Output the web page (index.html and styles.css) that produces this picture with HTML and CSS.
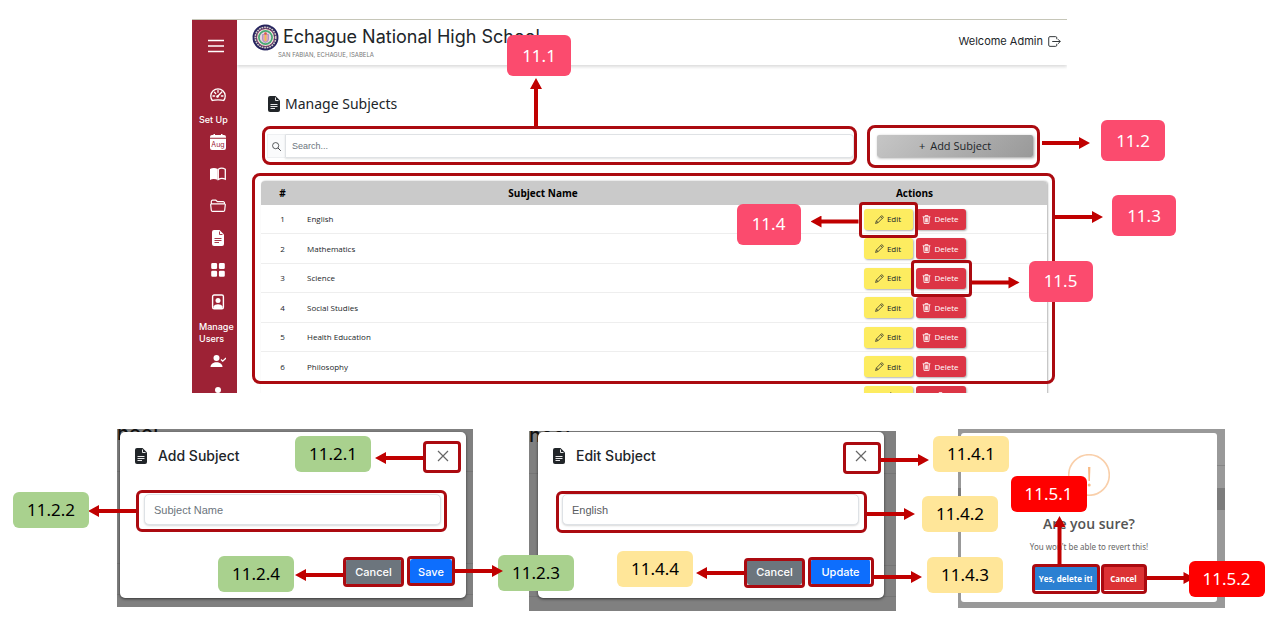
FILE: index.html
```html
<!DOCTYPE html>
<html lang="en">
<head>
<meta charset="utf-8">
<meta name="viewport" content="width=device-width, initial-scale=1">
<title>Manage Subjects</title>
<link rel="stylesheet" href="styles.css">
</head>
<body>
<svg class="sprite" aria-hidden="true">
  <symbol id="file" viewBox="0 0 12 16"><path fill="currentColor" d="M2 0h5.5L12 4.5V14a2 2 0 0 1-2 2H2a2 2 0 0 1-2-2V2a2 2 0 0 1 2-2z"/><path d="M7.500 1.500v3H10.500M2.500 8.500h7M2.500 10.500h7M2.500 12.500h4.500" fill="none" stroke="var(--cut)" stroke-width=".9"/></symbol>
  <symbol id="pencil" viewBox="0 0 16 16"><path fill="none" stroke="currentColor" stroke-width="1.300" stroke-linejoin="round" d="M12 1l3 3L5.500 13.500 1 15l1.500-4.500zM10 3l3 3M2.500 10.500l3 3"/></symbol>
  <symbol id="trash" viewBox="0 0 16 16"><path fill="none" stroke="currentColor" stroke-width="1.500" d="M1 3.200h14M5.500 3V1h5v2M2.700 3.500L3.700 15h8.600l1-11.500M5.800 5.500l.3 7.500M8 5.500V13M10.200 5.500L9.900 13"/></symbol>
  <symbol id="cross" viewBox="0 0 12 12"><path d="M1 1l10 10M11 1L1 11" fill="none" stroke="currentColor" stroke-width="1.200"/></symbol>
</svg>

<section class="app">
  <nav class="sidebar" aria-label="Main">
    <button class="menu" aria-label="Menu"><svg viewBox="0 0 16 16"><path d="M0 2.500h16M0 8h16M0 13.500h16" stroke="currentColor" stroke-width="1.300"/></svg></button>
    <ul>
      <li><a href="#" aria-label="Dashboard"><svg viewBox="0 0 16 16"><path d="M2.300 13.500a7.200 7.200 0 1 1 11.400 0c-2-.9-9.400-.9-11.400 0zM8 3.500v1.800M3 9h1.600M11.400 9H13M4.500 5.300l1.200 1.200M7.500 9.500L11.800 5" fill="none" stroke="currentColor" stroke-width="1.300" stroke-linecap="round"/><circle cx="7.500" cy="9.500" r="1.300" fill="currentColor"/></svg></a></li>
    </ul>
    <h2>Set Up</h2>
    <ul>
      <li><a href="#" aria-label="School year"><svg viewBox="0 0 16 16"><path d="M3.500 0h1.500v1h6V0h1.500v1H14a2 2 0 0 1 2 2v.800H0V3a2 2 0 0 1 2-2h1.500zM0 4.800h16V14a2 2 0 0 1-2 2H2a2 2 0 0 1-2-2z" fill="currentColor"/><text class="month" x="8" y="12.500">Aug</text></svg></a></li>
      <li><a href="#" aria-label="Books"><svg viewBox="0 0 16 16"><path d="M0 3c2-1.300 5.500-1.500 7.700 0v11C5.500 12.700 2 12.700 0 14z" fill="currentColor"/><path d="M8.300 3.200c2-1.400 5-1.200 7 0v10c-2-1-5-1-7 .300z" fill="none" stroke="currentColor" stroke-width="1.300"/></svg></a></li>
      <li><a href="#" aria-label="Folders"><svg viewBox="0 0 16 16"><path d="M1.300 5.500V3.500a1.300 1.300 0 0 1 1.300-1.300h3.200l1.700 1.500h5.700a1.300 1.300 0 0 1 1.300 1.300v.700M1.500 5.800h13a.8.8 0 0 1 .8.900l-.6 5.500a1.300 1.300 0 0 1-1.300 1.200H2.600a1.300 1.300 0 0 1-1.300-1.200L.7 6.700a.8.800 0 0 1 .8-.9z" fill="none" stroke="currentColor" stroke-width="1.200"/></svg></a></li>
      <li><a href="#" aria-label="Subjects"><svg><use href="#file"/></svg></a></li>
      <li><a href="#" aria-label="Sections"><svg viewBox="0 0 16 16"><path d="M2.500 1h3.300a1.300 1.300 0 0 1 1.300 1.300v3.400A1.300 1.300 0 0 1 5.800 7H2.500a1.300 1.300 0 0 1-1.300-1.300V2.300A1.300 1.300 0 0 1 2.500 1zm7.700 0h3.300a1.300 1.300 0 0 1 1.300 1.300v3.400A1.300 1.300 0 0 1 13.500 7h-3.300a1.300 1.300 0 0 1-1.300-1.300V2.300A1.300 1.300 0 0 1 10.200 1zM2.500 8.800h3.300a1.300 1.300 0 0 1 1.300 1.300v3.400a1.300 1.300 0 0 1-1.300 1.300H2.500a1.300 1.300 0 0 1-1.300-1.300v-3.400a1.300 1.300 0 0 1 1.300-1.300zm7.700 0h3.300a1.300 1.300 0 0 1 1.300 1.300v3.400a1.300 1.300 0 0 1-1.300 1.300h-3.300a1.300 1.300 0 0 1-1.300-1.300v-3.400a1.300 1.300 0 0 1 1.300-1.300z" fill="currentColor"/></svg></a></li>
      <li><a href="#" aria-label="Profiles"><svg viewBox="0 0 16 16"><rect x="2.600" y="1" width="10.800" height="13.800" rx="1.500" fill="none" stroke="currentColor" stroke-width="1.400"/><circle cx="8" cy="6.500" r="2.500" fill="currentColor"/><path d="M3.500 14v-1.500c1.500-3 7.500-3 9 0V14z" fill="currentColor"/></svg></a></li>
    </ul>
    <h2>Manage Users</h2>
    <ul>
      <li><a href="#" aria-label="Verified users"><svg viewBox="0 0 16 16"><circle cx="6.500" cy="5" r="3" fill="currentColor"/><path d="M.5 14c0-6.500 12-6.500 12 0z" fill="currentColor"/><path d="M11 6.500l1.700 1.700L16 5" fill="none" stroke="currentColor" stroke-width="1.300"/></svg></a></li>
      <li><a href="#" aria-label="Users"><svg viewBox="0 0 16 16"><circle cx="8" cy="5" r="3" fill="currentColor"/><path d="M2 14c0-6.500 12-6.500 12 0z" fill="currentColor"/></svg></a></li>
    </ul>
  </nav>

  <div class="content">
    <header class="topbar">
      <div>
        <div class="brand">
          <svg class="seal" viewBox="0 0 27 27" aria-hidden="true">
            <circle cx="13.500" cy="13.500" r="11" fill="#26245e"/>
            <circle cx="13.500" cy="13.500" r="11.500" fill="none" stroke="#26245e" stroke-width="3" stroke-dasharray="4.500 1.522" stroke-linecap="round"/>
            <circle cx="13.500" cy="13.500" r="10.300" fill="none" stroke="#d8cdc8" stroke-width="1.600" stroke-dasharray="1.800 .8"/>
            <circle cx="13.500" cy="13.500" r="8.800" fill="#f1f3ea" stroke="#a34a68" stroke-width=".8"/>
            <circle cx="13.500" cy="13.500" r="6.600" fill="#e6d3e2" stroke="#4aa873" stroke-width="1.700"/>
            <path d="M10.500 10.500h6v4.500q0 2.500-3 3.500q-3-1-3-3.500z" fill="#e2a3b4" stroke="#9a8cc4" stroke-width=".8"/>
            <path d="M13.500 9v8" stroke="#f0c34b" stroke-width="1.600"/>
            <circle cx="13.500" cy="9.500" r="1.300" fill="#d6534d"/>
          </svg>
          <h1>Echague National High School</h1>
        </div>
        <p class="address">SAN FABIAN, ECHAGUE, ISABELA</p>
      </div>
      <a class="logout" href="#">Welcome Admin
        <svg viewBox="0 0 14 12"><path d="M9.500 3.500V2A1.300 1.300 0 0 0 8.200.700H2A1.300 1.300 0 0 0 .7 2v8A1.300 1.300 0 0 0 2 11.300h6.200A1.300 1.300 0 0 0 9.500 10V8.500M4.500 6h8.800M10.800 3.500L13.300 6l-2.500 2.500" fill="none" stroke="currentColor"/></svg>
      </a>
    </header>

    <h2 class="page-title"><svg class="file"><use href="#file"/></svg>Manage Subjects</h2>

    <div class="toolbar">
      <div class="search mark">
        <label for="search" aria-label="Search"><svg viewBox="0 0 16 16"><circle cx="6.500" cy="6.500" r="5.500" fill="none" stroke="currentColor" stroke-width="1.300"/><path d="M10.500 10.500l5 5" stroke="currentColor" stroke-width="1.600"/></svg></label>
        <input id="search" type="text" placeholder="Search...">
        <span class="frame f-search"><i class="arrow up"></i><b class="tag pink">11.1</b></span>
      </div>
      <div class="mark add-wrap">
        <button class="add"><span>+</span>Add Subject</button>
        <span class="frame f-add"><i class="arrow right"></i><b class="tag pink">11.2</b></span>
      </div>
    </div>

    <div class="mark table-wrap">
      <table>
        <thead><tr><th class="c-num">#</th><th>Subject Name</th><th class="c-act">Actions</th></tr></thead>
        <tbody>
          <tr><td>1</td><td>English</td><td><div class="actions"><span class="mark"><button class="edit"><svg><use href="#pencil"/></svg>Edit</button><span class="frame f-edit"><i class="arrow left"></i><b class="tag pink">11.4</b></span></span><button class="delete"><svg><use href="#trash"/></svg>Delete</button></div></td></tr>
          <tr><td>2</td><td>Mathematics</td><td><div class="actions"><button class="edit"><svg><use href="#pencil"/></svg>Edit</button><button class="delete"><svg><use href="#trash"/></svg>Delete</button></div></td></tr>
          <tr><td>3</td><td>Science</td><td><div class="actions"><button class="edit"><svg><use href="#pencil"/></svg>Edit</button><span class="mark"><button class="delete"><svg><use href="#trash"/></svg>Delete</button><span class="frame f-delete"><i class="arrow right"></i><b class="tag pink">11.5</b></span></span></div></td></tr>
          <tr><td>4</td><td>Social Studies</td><td><div class="actions"><button class="edit"><svg><use href="#pencil"/></svg>Edit</button><button class="delete"><svg><use href="#trash"/></svg>Delete</button></div></td></tr>
          <tr><td>5</td><td>Health Education</td><td><div class="actions"><button class="edit"><svg><use href="#pencil"/></svg>Edit</button><button class="delete"><svg><use href="#trash"/></svg>Delete</button></div></td></tr>
          <tr><td>6</td><td>Philosophy</td><td><div class="actions"><button class="edit"><svg><use href="#pencil"/></svg>Edit</button><button class="delete"><svg><use href="#trash"/></svg>Delete</button></div></td></tr>
          <tr><td></td><td></td><td><div class="actions"><button class="edit" aria-label="Edit"><svg><use href="#pencil"/></svg></button><button class="delete" aria-label="Delete"><svg><use href="#trash"/></svg></button></div></td></tr>
        </tbody>
      </table>
      <span class="frame f-table"><i class="arrow right"></i><b class="tag pink">11.3</b></span>
    </div>
  </div>
</section>

<section class="dialogs">
  <div class="backdrop add-panel">
    <span class="behind" aria-hidden="true">hool</span>
    <form class="dialog">
      <div class="head">
        <svg class="file"><use href="#file"/></svg><h2>Add Subject</h2>
        <span class="mark"><button type="button" class="close" aria-label="Close"><svg><use href="#cross"/></svg></button><span class="frame a-close"><i class="arrow left"></i><b class="tag green">11.2.1</b></span></span>
      </div>
      <div class="mark field"><input type="text" aria-label="Subject Name" placeholder="Subject Name"><span class="frame a-name"><i class="arrow left"></i><b class="tag green">11.2.2</b></span></div>
      <div class="foot">
        <span class="mark"><button type="button" class="btn gray">Cancel</button><span class="frame a-cancel"><i class="arrow left"></i><b class="tag green">11.2.4</b></span></span>
        <span class="mark"><button type="button" class="btn blue save">Save</button><span class="frame a-save"><i class="arrow right"></i><b class="tag green">11.2.3</b></span></span>
      </div>
    </form>
  </div>

  <div class="backdrop edit-panel">
    <span class="behind" aria-hidden="true">hool</span>
    <form class="dialog">
      <div class="head">
        <svg class="file"><use href="#file"/></svg><h2>Edit Subject</h2>
        <span class="mark"><button type="button" class="close" aria-label="Close"><svg><use href="#cross"/></svg></button><span class="frame e-close"><i class="arrow right"></i><b class="tag yellow">11.4.1</b></span></span>
      </div>
      <div class="mark field"><input type="text" aria-label="Subject Name" value="English"><span class="frame e-name"><i class="arrow right"></i><b class="tag yellow">11.4.2</b></span></div>
      <div class="foot">
        <span class="mark"><button type="button" class="btn gray">Cancel</button><span class="frame e-cancel"><i class="arrow left"></i><b class="tag yellow">11.4.4</b></span></span>
        <span class="mark"><button type="button" class="btn blue update">Update</button><span class="frame e-update"><i class="arrow right"></i><b class="tag yellow">11.4.3</b></span></span>
      </div>
    </form>
  </div>

  <div class="backdrop confirm-panel">
    <div class="dialog confirm">
      <svg class="warn" viewBox="0 0 42 42" aria-hidden="true"><circle cx="21" cy="21" r="20.300" fill="none" stroke="#f9cfaa" stroke-width="1.600"/><path d="M20 13h2.400l-.5 14h-1.400z" fill="#f8bb86"/><circle cx="21.200" cy="31" r="1.500" fill="#f8bb86"/></svg>
      <h2>Are you sure?</h2>
      <p>You won't be able to revert this!</p>
      <div class="choices">
        <span class="mark"><button class="yes">Yes, delete it!</button><span class="frame c-yes"><i class="arrow up"></i><b class="tag red">11.5.1</b></span></span>
        <span class="mark"><button class="no">Cancel</button><span class="frame c-no"><i class="arrow right"></i><b class="tag red">11.5.2</b></span></span>
      </div>
    </div>
  </div>
</section>
</body>
</html>
```
FILE: styles.css
```css
* { box-sizing: border-box; }
body { margin: 0; padding: 19px 0 0; background: #fff; color: #212529; font-family: "Open Sans", "Noto Sans", sans-serif; font-size: 8px; }
h1, h2, p, ul { margin: 0; padding: 0; }
ul { list-style: none; }
button { border: 0; padding: 0; font: inherit; color: inherit; background: none; cursor: pointer; }
input { font-family: "Liberation Sans", sans-serif; }
a { color: inherit; text-decoration: none; }
svg { display: block; flex: none; }
.sprite { position: absolute; width: 0; height: 0; }
.file { --cut: #fff; width: 12px; height: 16px; }

/* Application window */
.app { display: flex; height: 374px; margin: 0 213px 0 192px; border-top: 1px solid #c6c6b8; overflow-x: visible; overflow-y: clip; }
.sidebar { flex: 0 0 45px; padding-top: 18px; background: #9d2235; color: #fff; --cut: #9d2235; font-family: Inter, sans-serif; }
.sidebar svg { width: 16px; height: 16px; }
.menu { display: block; margin: 0 0 25px 16px; }
.sidebar li { display: flex; align-items: center; height: 32px; padding-left: 18px; }
.sidebar h2 { margin: 3px 0 0 7px; font-size: 9px; line-height: 12px; font-weight: 500; }
.month { font: 7px Inter, sans-serif; text-anchor: middle; fill: #9d2235; }

.content { flex: 1; min-width: 0; }
.topbar { display: flex; justify-content: space-between; height: 45px; padding: 4px 6px 0 15px; box-shadow: 0 2px 3px rgba(0, 0, 0, .14); clip-path: inset(0 0 -6px 0); font-family: Inter, sans-serif; }
.brand { display: flex; align-items: center; gap: 4px; height: 26px; }
.seal { width: 27px; height: 27px; }
.brand h1 { font-size: 18px; line-height: 24px; font-weight: 400; white-space: nowrap; -webkit-text-stroke: 0; }
.address { margin-left: 26px; font-size: 6px; line-height: 9px; color: #777; }
.logout { display: flex; align-items: center; gap: 5px; height: 34px; font-size: 11px; }
.logout svg { width: 13px; height: 11px; }
.page-title { display: flex; align-items: center; gap: 5px; margin: 29px 0 20px 31px; font-family: "Noto Sans", sans-serif; font-size: 14px; line-height: 20px; font-weight: 400; }

.toolbar { display: flex; gap: 23px; align-items: center; padding: 0 34px 0 30px; }
.search { display: flex; flex: 1; height: 24px; }
.search label { display: flex; align-items: center; justify-content: center; width: 18px; background: #fafbfc; border: 1px solid #eef0f2; border-right: 0; }
.search label svg { width: 9px; height: 9px; }
.search input { flex: 1; min-width: 0; padding: 0 6px; border: 1px solid #dfe2e5; border-radius: 0 4px 4px 0; font-size: 9px; box-shadow: 0 1px 2px rgba(0, 0, 0, .12); }
input::placeholder { color: #6c757d; opacity: 1; }
.add-wrap { flex: 0 0 156px; }
.add { display: flex; align-items: center; justify-content: center; gap: 5px; width: 100%; height: 22px; border-radius: 2px; background: linear-gradient(135deg, #c6c6c6, #999); box-shadow: 1px 1px 3px rgba(0, 0, 0, .4); font: 11px/20px "Open Sans", sans-serif; }

.table-wrap { margin: 23px 20px 0 24px; }
table { width: 100%; table-layout: fixed; border-spacing: 0; border-radius: 4px; box-shadow: 1px 0 2px rgba(0, 0, 0, .3); }
.c-num { width: 43px; }
.c-act { width: 265px; }
th { height: 24px; padding: 0; background: #cacaca; color: #000; font-size: 10px; line-height: 14px; font-weight: 700; }
th:first-child { border-top-left-radius: 4px; }
th:last-child { border-top-right-radius: 4px; }
td { height: 29px; padding: 0; border-bottom: 1px solid #eee; line-height: 12px; }
tr:nth-child(even) td { height: 30px; }
td:first-child { text-align: center; }
td:nth-child(2) { padding-left: 3px; }
.actions { display: flex; justify-content: center; gap: 3px; }
.actions button { display: flex; align-items: center; justify-content: center; gap: 3px; height: 21px; border-radius: 3px; box-shadow: 1px 1px 2px rgba(0, 0, 0, .3); }
.actions svg { width: 9px; height: 9px; }
.actions .edit { width: 49px; background: #fdec60; }
.actions .delete { width: 50px; background: #dc3545; color: #fff; }

/* Dialog windows */
.dialogs { display: grid; grid-template-columns: 356fr 56fr 367fr 62fr 267fr; align-items: start; padding: 36px 55px 30px 117px; }
.backdrop { position: relative; background: linear-gradient(#757575, #757575) 0 42px / 100% 1px no-repeat, linear-gradient(#757575, #757575) 0 134px / 100% 1px no-repeat, linear-gradient(#757575, #757575) 0 165px / 100% 1px no-repeat, #808080; }
.add-panel { padding: 3px 7px 9px 3px; }
.edit-panel { grid-column: 3; margin-top: 2px; padding: 1px 12px 13px 9px; }
.confirm-panel { grid-column: 5; padding: 4px 8px 6px 3px; background: linear-gradient(#7c7c7c, #7c7c7c) 0 59px / 100% 22px no-repeat, linear-gradient(#868686, #868686) 0 36px / 100% 1px no-repeat, #999; }
.behind { position: absolute; top: 0; left: 0; height: 14px; overflow: hidden; font: 500 20px/8px Inter, sans-serif; color: #111; }
.dialog { position: relative; background: #fff; border-radius: 5px; box-shadow: 0 1px 3px rgba(0, 0, 0, .6); padding: 12px 0 13px; }
.head { display: flex; align-items: center; height: 24px; padding: 0 17px 0 15px; }
.head h2 { flex: 1; margin-left: 11px; font: 500 14px/20px Inter, sans-serif; }
.close { display: block; color: #666; }
.close svg { width: 12px; height: 12px; }
.field { margin: 26px 25px 0 24px; }
.field input { display: block; width: 100%; height: 31px; padding: 0 9px; border: 1px solid #dee2e6; border-radius: 5px; font-size: 11px; color: #595c5f; box-shadow: 0 1px 2px rgba(0, 0, 0, .15); }
.foot { display: flex; justify-content: flex-end; gap: 9px; margin-top: 34px; padding-right: 14px; }
.btn { display: block; width: 55px; height: 26px; border-radius: 3px; color: #fff; font: 500 11px/20px Inter, sans-serif; }
.gray { background: #6c757d; }
.blue { background: #0d6efd; }
.save { width: 42px; }
.update { width: 59px; }
.confirm { padding: 21px 0 12px; text-align: center; box-shadow: none; border-radius: 3px; }
.warn { width: 42px; height: 42px; margin: 0 auto; }
.confirm h2 { margin-top: 18px; font-size: 14px; line-height: 20px; font-weight: 600; color: #545454; }
.confirm p { margin-top: 7px; line-height: 12px; color: #666; font-family: "Noto Sans", sans-serif; }
.choices { display: flex; justify-content: center; gap: 7px; margin-top: 14px; }
.choices button { display: block; height: 23px; color: #fff; font-weight: 700; }
.choices .yes { width: 62px; background: #2b80d2; }
.choices .no { width: 40px; background: #dc3234; }

/* Callouts: a frame over its target, an arrow and a numbered tag */
.mark { position: relative; }
.frame { position: absolute; z-index: 1; border: 3px solid #ab0a10; border-radius: 4px; pointer-events: none; }
.f-search, .f-add, .f-table { border-radius: 8px; }
.a-name, .e-name { border-radius: 6px; }
.arrow { position: absolute; background: #c00000; width: 48px; height: 12px; }
.right { left: calc(100% + 3px); clip-path: polygon(0 4px, 37px 4px, 37px 0, 100% 50%, 37px 100%, 37px 8px, 0 8px); }
.left { right: calc(100% + 3px); clip-path: polygon(100% 4px, 11px 4px, 11px 0, 0 50%, 11px 100%, 11px 8px, 100% 8px); }
.up { bottom: calc(100% + 3px); width: 12px; height: 48px; clip-path: polygon(4px 100%, 4px 11px, 0 11px, 50% 0, 100% 11px, 8px 11px, 8px 100%); }
.tag { position: absolute; display: flex; align-items: center; justify-content: center; width: 76px; height: 36px; border-radius: 6px; font: 400 17px/24px "Noto Sans", sans-serif; }
.pink { width: 64px; height: 41px; background: #fb4b6e; color: #fff; }
.green { background: #a9d18e; color: #000; }
.yellow { background: #ffe699; color: #000; }
.red { background: #f00; color: #fff; }

.f-search { inset: -8px -3px -7px -5px; }
.f-search .arrow { left: 265px; }
.f-search .tag { left: 242px; top: -94px; }
.f-add { inset: -10px -7px -11px -10px; }
.f-add .arrow { left: calc(100% + 5px); top: 9px; }
.f-add .tag { left: calc(100% + 64px); top: -8px; }
.f-table { top: -8px; left: -9px; right: -8px; height: 211px; }
.f-table .arrow { top: 35px; }
.f-table .tag { left: calc(100% + 60px); top: 19px; }
.f-edit { inset: -7px -5px -8px; z-index: 2; }
.f-edit .arrow { top: 11px; }
.f-edit .tag { right: calc(100% + 61px); top: -1px; }
.f-delete { inset: -8px -6px -8px -5px; z-index: 2; }
.f-delete .arrow { top: 14px; }
.f-delete .tag { left: calc(100% + 60px); top: -2px; }

.a-close { inset: -9px -12px -11px -14px; }
.a-close .arrow { top: 8px; }
.a-close .tag { right: calc(100% + 55px); top: -8px; }
.a-name { inset: -4px -6px -7px -8px; }
.a-name .arrow { top: 12px; }
.a-name .tag { right: calc(100% + 50px); top: -1px; }
.a-cancel { inset: -2px -3px; }
.a-cancel .arrow { top: 9px; }
.a-cancel .tag { right: calc(100% + 52px); top: -4px; }
.a-save { inset: -3px -3px -1px; }
.a-save .arrow { top: 6px; z-index: 1; }
.a-save .tag { left: calc(100% + 46px); top: -4px; }

.e-close { inset: -8px -14px -12px -12px; }
.e-close .arrow { top: 9px; }
.e-close .tag { left: calc(100% + 55px); top: -9px; }
.e-name { inset: -3px -8px -8px -6px; }
.e-name .arrow { top: 14px; }
.e-name .tag { left: calc(100% + 58px); top: 2px; }
.e-cancel { inset: -1px -3px -3px; }
.e-cancel .arrow { top: 6px; }
.e-cancel .tag { right: calc(100% + 54px); top: -10px; }
.e-update { inset: -2px -4px -2px -3px; }
.e-update .arrow { top: 11px; }
.e-update .tag { left: calc(100% + 56px); top: -3px; }

.c-yes { inset: -3px -3px -4px; }
.c-yes .arrow { left: 19px; z-index: 1; }
.c-yes .tag { left: -24px; top: -91px; }
.c-no { inset: -3px -3px -4px; }
.c-no .arrow { top: 5px; }
.c-no .tag { left: calc(100% + 45px); top: -6px; }
```
